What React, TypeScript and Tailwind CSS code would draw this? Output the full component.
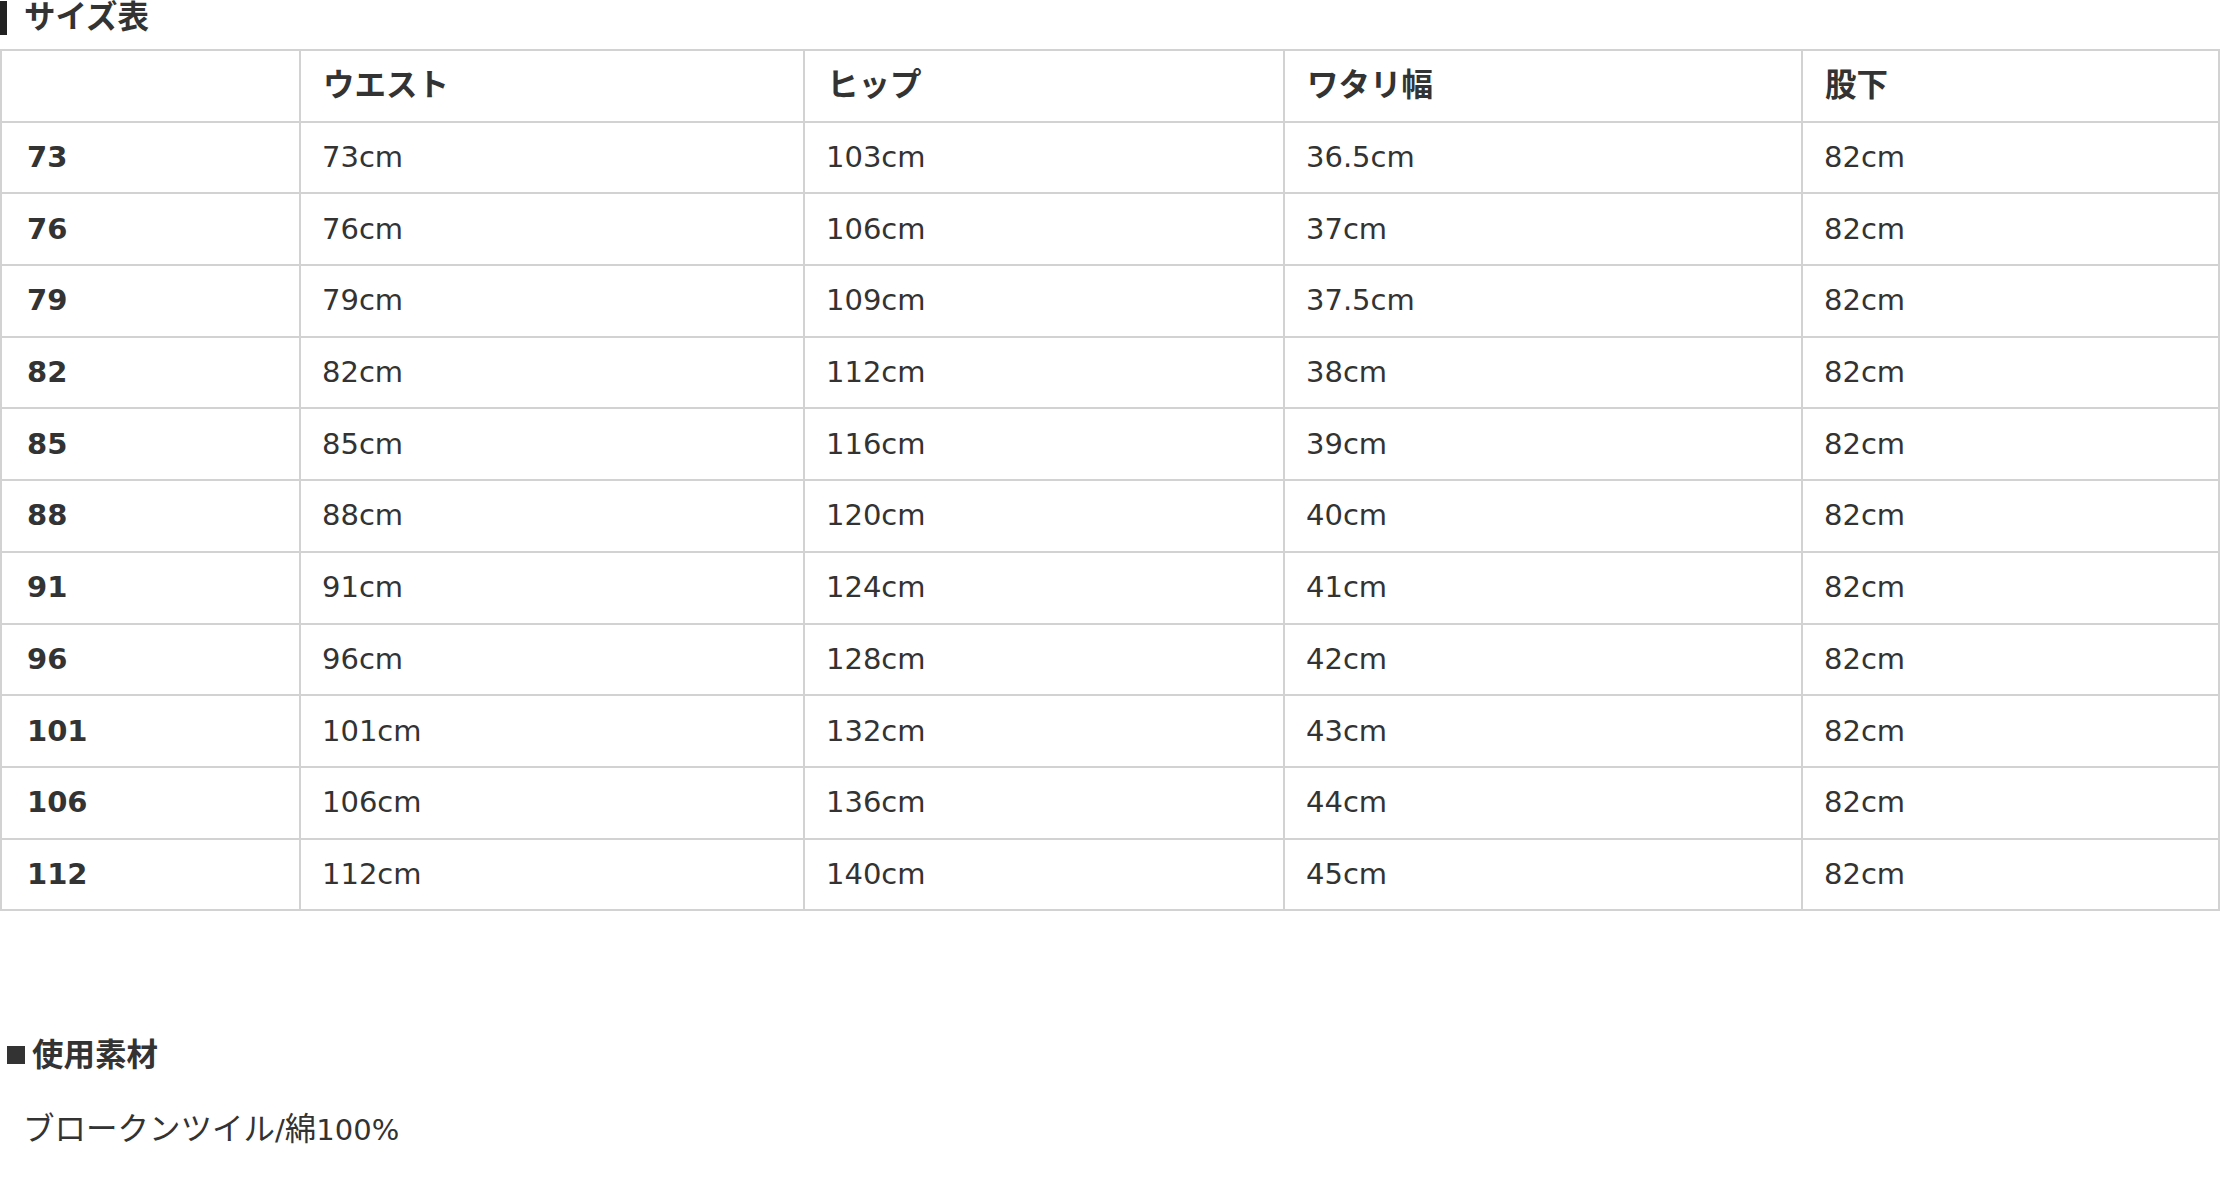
import React from 'react';

const rows: [string, string, string, string, string][] = [
  ['73', '73cm', '103cm', '36.5cm', '82cm'],
  ['76', '76cm', '106cm', '37cm', '82cm'],
  ['79', '79cm', '109cm', '37.5cm', '82cm'],
  ['82', '82cm', '112cm', '38cm', '82cm'],
  ['85', '85cm', '116cm', '39cm', '82cm'],
  ['88', '88cm', '120cm', '40cm', '82cm'],
  ['91', '91cm', '124cm', '41cm', '82cm'],
  ['96', '96cm', '128cm', '42cm', '82cm'],
  ['101', '101cm', '132cm', '43cm', '82cm'],
  ['106', '106cm', '136cm', '44cm', '82cm'],
  ['112', '112cm', '140cm', '45cm', '82cm'],
];

const headers = ['ウエスト', 'ヒップ', 'ワタリ幅', '股下'];

const font = { fontFamily: '"DejaVu Sans", "Noto Sans CJK JP", sans-serif' };

// japanese glyphs render a bit larger than the latin ones in the original
const Jp: React.FC<{ children: React.ReactNode }> = ({ children }) => (
  <span className="text-[31.5px]">{children}</span>
);

const App: React.FC = () => {
  return (
    <div className="bg-white text-[#333] text-[29px] leading-none min-h-[1183px]" style={font}>
      <h3 className="flex items-center h-[40px] pb-[4px] font-bold">
        <span className="w-[7px] h-[34px] bg-[#222] mr-[17px]" />
        <Jp>サイズ表</Jp>
      </h3>
      <table className="mt-[9px] w-[2218px] table-fixed border-collapse border-2 border-[#d2d2d2]">
        <colgroup>
          <col className="w-[299px]" />
          <col className="w-[504px]" />
          <col className="w-[480px]" />
          <col className="w-[518px]" />
          <col className="w-[417px]" />
        </colgroup>
        <thead>
          <tr className="h-[71.7px]">
            <th className="border-2 border-[#d2d2d2]" />
            {headers.map((h) => (
              <th key={h} className="border-2 border-[#d2d2d2] text-left font-bold pl-[22px]">
                <Jp>{h}</Jp>
              </th>
            ))}
          </tr>
        </thead>
        <tbody>
          {rows.map((r) => (
            <tr key={r[0]} className="h-[71.7px]">
              <th className="border-2 border-[#d2d2d2] text-left font-bold pl-[25px]">{r[0]}</th>
              {r.slice(1).map((c, i) => (
                <td key={i} className="border-2 border-[#d2d2d2] pl-[21px]">
                  {c}
                </td>
              ))}
            </tr>
          ))}
        </tbody>
      </table>

      <div className="mt-[129px] pl-[7px] font-bold flex items-center h-[30px]">
        <span className="inline-block w-[18px] h-[18px] bg-[#333] mr-[7px]" />
        <Jp>使用素材</Jp>
      </div>
      <p className="mt-[44px] pl-[23px]">
        <Jp>ブロークンツイル</Jp>/<Jp>綿</Jp>100%
      </p>
    </div>
  );
};

export default App;
